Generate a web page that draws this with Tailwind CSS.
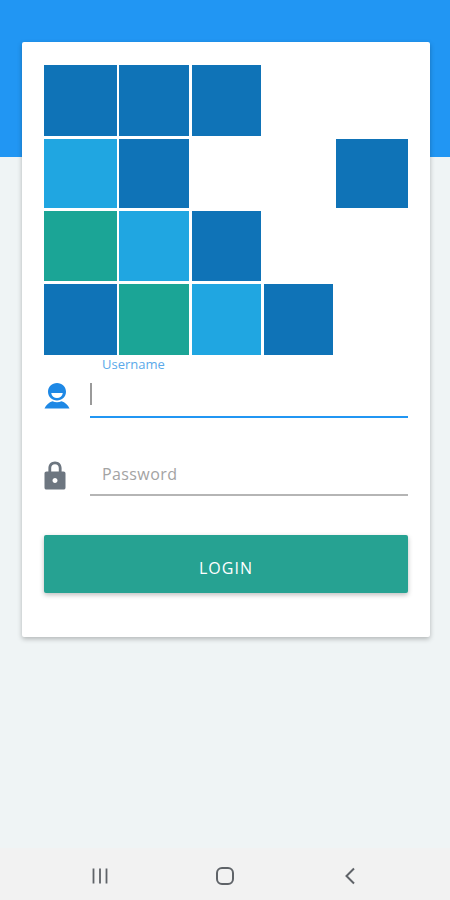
<!DOCTYPE html>
<html lang="en">
<head>
  <meta charset="UTF-8">
  <meta name="viewport" content="width=device-width, initial-scale=1.0">
  <title>Login</title>
  <script src="https://cdn.jsdelivr.net/npm/@tailwindcss/browser@4"></script>
</head>
<body class="bg-[#eff4f5] font-['Open_Sans',sans-serif]">
  <div class="relative flex h-[900px] w-[450px] flex-col overflow-hidden">
    <!-- Background -->
    <div class="h-[157px] bg-[#2196f3]"></div>
    <div class="flex-1"></div>

    <!-- Login card -->
    <div class="absolute left-[22px] top-[42px] h-[595px] w-[408px] rounded-[2px] bg-white px-[22px] pt-[23px] shadow-[0_2px_5px_rgba(0,0,0,0.26)]">
      <!-- Logo -->
      <div class="grid grid-cols-[73px_70px_70px_70px_73px] grid-rows-[71px_69px_70px_71px] gap-x-[2px] gap-y-[3px]">
        <div class="bg-[#0f73b7]"></div>
        <div class="bg-[#0f73b7]"></div>
        <div class="ml-px bg-[#0f73b7]"></div>
        <div></div>
        <div></div>

        <div class="bg-[#20a6e1]"></div>
        <div class="bg-[#0f73b7]"></div>
        <div></div>
        <div></div>
        <div class="ml-px bg-[#0f73b7]"></div>

        <div class="bg-[#1ba596]"></div>
        <div class="bg-[#20a6e1]"></div>
        <div class="ml-px bg-[#0f73b7]"></div>
        <div></div>
        <div></div>

        <div class="bg-[#0f73b7]"></div>
        <div class="bg-[#1ba596]"></div>
        <div class="ml-px bg-[#20a6e1]"></div>
        <div class="ml-px bg-[#0f73b7]"></div>
        <div></div>
      </div>

      <!-- Username -->
      <div class="mt-[3px] flex h-[60px] items-start">
        <div class="flex w-[46px] shrink-0 pt-[25px]">
          <svg class="h-[26px] w-[26px]" viewBox="0 0 26 26" fill="#1e88e5">
            <path fill-rule="evenodd" d="M13 0c5 0 9 3.800 9 8.800s-4 8.700-9 8.700-9-3.700-9-8.700S8 0 13 0zM7.200 10c.5 3.300 2.900 5 5.800 5s5.300-1.700 5.800-5z"/>
            <path d="M8.500 18.300c1.400.6 2.900.9 4.500.9s3.100-.3 4.500-.9c3.500 1.200 6.500 3.500 8 7.200H.5c1.500-3.700 4.500-6 8-7.200z"/>
          </svg>
        </div>
        <div class="relative h-[60px] flex-1 border-b-2 border-[#2196f3]">
          <label class="absolute left-[12px] top-[-2px] text-[13px] leading-[17px] text-[#5aa9ea]">Username</label>
          <span class="absolute left-0 top-[25px] h-[22px] w-[1.500px] bg-[#9a9a9a]"></span>
        </div>
      </div>

      <!-- Password -->
      <div class="mt-[17px] flex h-[60px] items-start">
        <div class="flex w-[46px] shrink-0 pt-[26px]">
          <svg class="h-[29px] w-[22px]" viewBox="0 0 22 29" fill="#6d7680">
            <path fill-rule="evenodd" d="M11 0.500c-3.900 0-6.600 2.800-6.600 6.600v3.400H2.600C1.200 10.500 0.500 11.300 0.500 12.600v13.800c0 1.300.7 2.100 2.100 2.100h16.800c1.400 0 2.100-.8 2.100-2.100V12.600c0-1.300-.7-2.100-2.100-2.100h-1.800V7.100c0-3.800-2.700-6.600-6.600-6.600zM7.200 10.500V7.100c0-2.300 1.500-3.900 3.800-3.900s3.800 1.600 3.800 3.900v3.400zM11 17c1.400 0 2.500 1.100 2.500 2.500S12.400 22 11 22s-2.500-1.100-2.500-2.500S9.600 17 11 17z"/>
          </svg>
        </div>
        <div class="relative h-[61px] flex-1 border-b-2 border-[#b5b5b5]">
          <span class="absolute left-[12px] top-[28px] text-[16px] leading-[22px] tracking-[0.4px] text-[#a3a3a3]">Password</span>
        </div>
      </div>

      <!-- Login button -->
      <button class="mt-[40px] h-[58px] w-full rounded-[2px] bg-[#26a292] pt-[7px] text-[16px] font-normal tracking-[1px] text-white shadow-[0_2px_5px_rgba(0,0,0,0.26)]">LOGIN</button>
    </div>

    <!-- Android nav bar -->
    <div class="grid h-[52px] grid-cols-3 items-center bg-[#f2f2f2] px-[37px] pt-[4px]">
      <div class="flex justify-center">
        <svg class="h-[18px] w-[18px]" viewBox="0 0 18 18" fill="none" stroke="#5f6368" stroke-width="1.800">
          <path d="M2.500 1.500v15M9 1.500v15M15.500 1.500v15"/>
        </svg>
      </div>
      <div class="flex justify-center">
        <svg class="h-[20px] w-[20px]" viewBox="0 0 20 20" fill="none" stroke="#5f6368" stroke-width="2">
          <rect x="2" y="2" width="16" height="16" rx="5"/>
        </svg>
      </div>
      <div class="flex justify-center">
        <svg class="h-[18px] w-[12px]" viewBox="0 0 12 18" fill="none" stroke="#5f6368" stroke-width="2">
          <path d="M10 1.500 2.500 9l7.500 7.500"/>
        </svg>
      </div>
    </div>
  </div>
</body>
</html>
